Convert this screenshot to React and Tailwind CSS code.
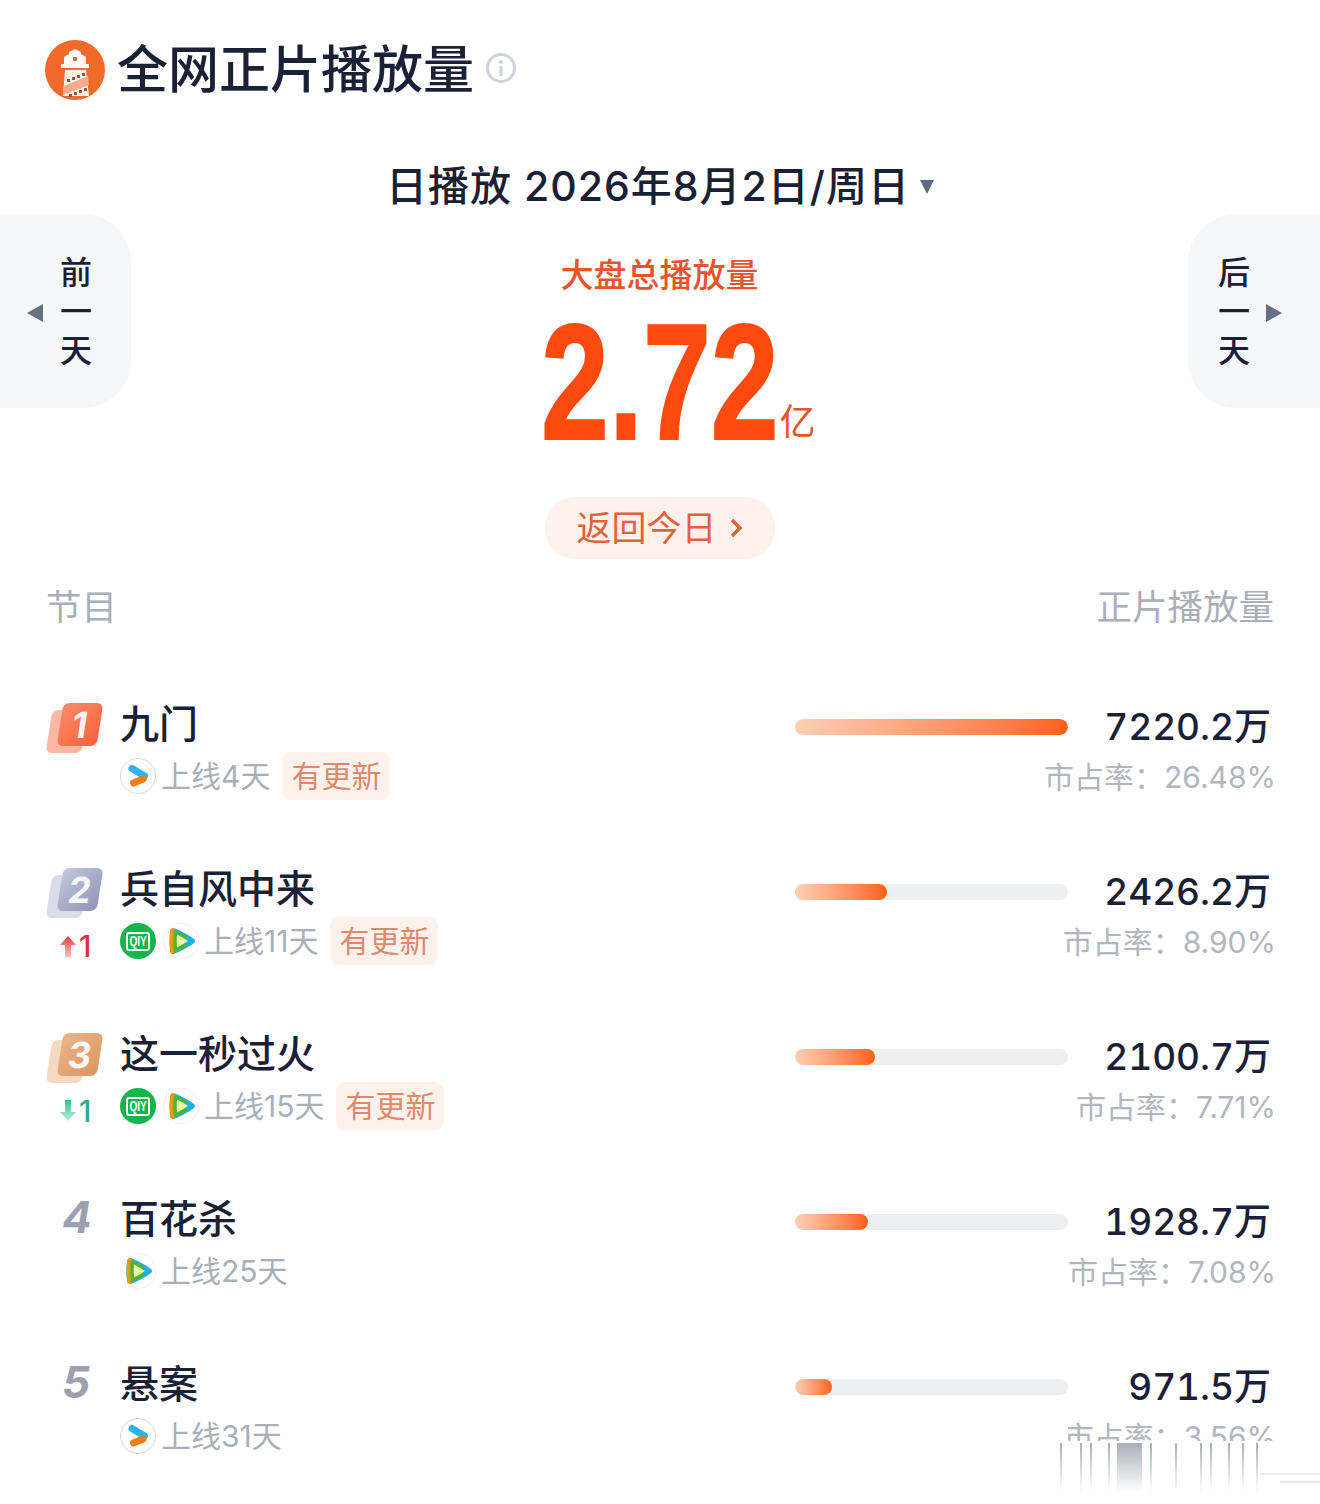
import React from 'react';

const rows = [
    { rank: 1, title: '九门', icons: ['youku'], days: '上线4天', update: true, bar: '100%', value: '7220.2万', share: '26.48%', badge: 'gold' },
    { rank: 2, title: '兵自风中来', icons: ['iqiyi', 'tencent'], days: '上线11天', update: true, bar: '33.7%', value: '2426.2万', share: '8.90%', badge: 'silver', change: 'up' },
    { rank: 3, title: '这一秒过火', icons: ['iqiyi', 'tencent'], days: '上线15天', update: true, bar: '29.3%', value: '2100.7万', share: '7.71%', badge: 'bronze', change: 'down' },
    { rank: 4, title: '百花杀', icons: ['tencent'], days: '上线25天', bar: '26.7%', value: '1928.7万', share: '7.08%' },
    { rank: 5, title: '悬案', icons: ['youku'], days: '上线31天', bar: '13.6%', value: '971.5万', share: '3.56%', cut: true },
];

// vertical smear left by the watermark at the bottom of the picture
const smear = [
    { left: 280, width: 2 }, { left: 300, width: 2 }, { left: 310, width: 2 }, { left: 328, width: 2 },
    { left: 337, width: 25 }, { left: 370, width: 2 }, { left: 395, width: 2 }, { left: 420, width: 2 },
    { left: 430, width: 2 }, { left: 448, width: 2 }, { left: 462, width: 2 }, { left: 476, width: 2 },
];

function Logo() {
    return (
        <svg width="60" height="60" viewBox="0 0 60 60">
            <defs>
                <clipPath id="logoClip"><circle cx="30" cy="30" r="30" /></clipPath>
            </defs>
            <circle cx="30" cy="30" r="30" fill="#f26a2a" />
            <g clipPath="url(#logoClip)">
                <path d="M19 17 L24 14 L24 12 L30 9 L36 12 L36 14 L41 17 L41 24 L44 24 L44 28 L16 28 L16 24 L19 24 Z" fill="#fff" />
                <circle cx="30" cy="19" r="2.2" fill="#c46a3c" />
                <path d="M20 30 L41 30 L44 56 L18 56 Z" fill="#fbeee2" />
                <path d="M19 46 L43 36 L44 45 L18 55 Z" fill="#f3a98a" />
                <g fill="#8a5a44">
                    <rect x="22" y="39" width="3" height="3" />
                    <rect x="27" y="37" width="3" height="3" />
                    <rect x="32" y="35" width="3" height="3" />
                    <rect x="37" y="33" width="3" height="3" />
                    <rect x="24" y="54" width="3" height="3" />
                    <rect x="29" y="52" width="3" height="3" />
                    <rect x="34" y="50" width="3" height="3" />
                    <rect x="39" y="48" width="3" height="3" />
                </g>
            </g>
        </svg>
    );
}

function InfoIcon() {
    return (
        <svg width="32" height="32" viewBox="0 0 32 32">
            <circle cx="16" cy="16" r="13.5" fill="none" stroke="#cdd2da" strokeWidth="3" />
            <circle cx="16" cy="10" r="2" fill="#cdd2da" />
            <rect x="14.4" y="14" width="3.2" height="10" rx="1" fill="#cdd2da" />
        </svg>
    );
}

function Youku() {
    return (
        <svg width="36" height="36" viewBox="0 0 36 36" className="shrink-0">
            <circle cx="18" cy="18" r="17.5" fill="#fff" stroke="#d3d7dc" />
            <line x1="12" y1="10.5" x2="24.5" y2="18" stroke="#2fb3ea" strokeWidth="7" strokeLinecap="round" />
            <line x1="13.5" y1="25" x2="23" y2="21" stroke="#ee7d1c" strokeWidth="7" strokeLinecap="round" />
        </svg>
    );
}

function Iqiyi() {
    return (
        <div className="flex h-[36px] w-[36px] shrink-0 items-center justify-center rounded-full bg-[#14b54b]">
            <div className="flex h-[19px] w-[24px] items-center justify-center rounded-[3px] border-2 border-white">
                <span className="inline-block scale-x-[0.72] font-['Liberation_Sans'] text-[14px] leading-none font-bold text-white">QIY</span>
            </div>
        </div>
    );
}

function Tencent() {
    return (
        <svg width="36" height="36" viewBox="0 0 36 36" className="shrink-0">
            <circle cx="18" cy="18" r="17.5" fill="#fff" stroke="#f1f2f4" />
            <path d="M7 9 Q7 4 12 5.5 Q23 10 31 16 Q33 18 31 20 Q23 26 12 30.5 Q7 32 7 27 Q6 18 7 9 Z" fill="#1cb0e4" />
            <path d="M7 9 Q7 4 12 5.5 Q10.5 18 12 30.5 Q7 32 7 27 Q6 18 7 9 Z" fill="#e8961c" />
            <path d="M11 7 Q17 9 24 13 Q21 18 24 23 Q17 27 11 29 Q9.5 18 11 7 Z" fill="#4fb52f" />
            <path d="M14 11.5 Q20 14.5 25 18 Q20 21.5 14 24.5 Q13.5 18 14 11.5 Z" fill="#e6f6b0" />
        </svg>
    );
}

function RankBadge({ rank, badge }) {
    const styles = {
        gold: { back: 'bg-[#fcb8a4]', front: 'bg-gradient-to-br from-[#fb8a68] to-[#fb5f3c]' },
        silver: { back: 'bg-[#d9dcea]', front: 'bg-gradient-to-br from-[#c3c7de] to-[#8e95b5]' },
        bronze: { back: 'bg-[#f6d9c2]', front: 'bg-gradient-to-br from-[#eab68a] to-[#dc9660]' },
    };
    return (
        <div className="relative h-[50px] w-[60px]">
            <div className={`absolute top-[7px] left-[4px] h-[43px] w-[36px] -skew-x-[9deg] rounded-[6px] ${styles[badge].back}`}></div>
            <div className={`absolute top-0 left-[15px] flex h-[43px] w-[40px] -skew-x-[9deg] items-center justify-center rounded-[6px] ${styles[badge].front}`}>
                <span className="font-['Inter'] text-[36px] leading-none font-bold text-white/90">{rank}</span>
            </div>
        </div>
    );
}

function RankChange({ change }) {
    const up = change === 'up';
    return (
        <div className="mt-[11px] ml-[14px] flex h-[34px] items-center gap-[2px]">
            <svg width="18" height="24" viewBox="0 0 18 24" className={up ? '' : 'rotate-180'}>
                <defs>
                    <linearGradient id="upArrow" x1="0" y1="0" x2="0" y2="1">
                        <stop offset="0" stopColor="#ef3b3b" />
                        <stop offset="1" stopColor="#fbc0c0" />
                    </linearGradient>
                    <linearGradient id="downArrow" x1="0" y1="1" x2="0" y2="0">
                        <stop offset="0" stopColor="#2cc38f" />
                        <stop offset="1" stopColor="#c5eee0" />
                    </linearGradient>
                </defs>
                <path d="M9 2 L17 11 L12 11 L12 23 L6 23 L6 11 L1 11 Z" fill={up ? 'url(#upArrow)' : 'url(#downArrow)'} />
            </svg>
            <span className={`font-['Inter'] text-[30px] leading-none font-medium ${up ? 'text-[#d8343c]' : 'text-[#35a985]'}`}>1</span>
        </div>
    );
}

function Row({ row }) {
    return (
        <div className="flex h-[165px] items-start">
            <div className="w-[75px] shrink-0 pt-[13px]">
                {row.badge ? (
                    <>
                        <RankBadge rank={row.rank} badge={row.badge} />
                        {row.change && <RankChange change={row.change} />}
                    </>
                ) : (
                    <div className="mt-[-5px] pl-[17px] font-['Inter'] text-[44px] leading-[48px] font-bold text-[#9ca1af] italic">{row.rank}</div>
                )}
            </div>
            <div className="min-w-0 flex-1 pt-[10px]">
                <div className="text-[39px] leading-[48px] font-medium text-[#1a2035]">{row.title}</div>
                <div className="mt-[4px] flex h-[48px] items-center">
                    <div className="flex items-center gap-[7px]">
                        {row.icons.map((name, idx) => {
                            if (name === 'youku') return <Youku key={idx} />;
                            if (name === 'iqiyi') return <Iqiyi key={idx} />;
                            return <Tencent key={idx} />;
                        })}
                    </div>
                    <span className="ml-[5px] text-[30px] leading-none text-[#a9afb9]">{row.days}</span>
                    {row.update && (
                        <span className="ml-[12px] flex h-[48px] items-center rounded-[9px] bg-[#fdf1ec] px-[9px] text-[30px] leading-none text-[#dc8a6c]">有更新</span>
                    )}
                </div>
            </div>
            <div className="mt-[29px] h-[16px] w-[273px] shrink-0 overflow-hidden rounded-full bg-[#eeeff1]">
                <div className="h-full rounded-full bg-gradient-to-r from-[#fbcfb4] to-[#ff5f10]" style={{ width: row.bar }}></div>
            </div>
            <div className="w-[208px] shrink-0 pt-[13px] text-right">
                <div className="pr-[5px] text-[37px] leading-[48px] font-medium text-[#1a2035] tabular-nums">{row.value}</div>
                <div className={`mt-[6px] flex justify-end text-[30px] leading-[40px] whitespace-nowrap text-[#b1b6bf] ${row.cut ? 'h-[24px] overflow-hidden' : ''}`}>
                    市占率：{row.share}
                </div>
            </div>
        </div>
    );
}

export default function App() {
    return (
        <div className="relative h-[1504px] w-[1320px] overflow-hidden bg-white font-['Inter','Noto_Sans_CJK_SC',sans-serif]">
            {/* header */}
            <div className="flex items-center pt-[40px] pl-[45px]">
                <Logo />
                <h1 className="ml-[12px] text-[51px] leading-[60px] font-medium text-[#1a2035]">全网正片播放量</h1>
                <div className="mt-[-4px] ml-[11px]"><InfoIcon /></div>
            </div>

            {/* date */}
            <div className="mt-[62px] flex h-[48px] items-center justify-center text-[41px] leading-[48px] font-medium tracking-[1px] text-[#1a2035]">
                <span>日播放 2026年8月2日/周日</span>
                <span className="mt-[2px] ml-[10px] h-0 w-0 border-x-[7px] border-t-[14px] border-x-transparent border-t-[#5d6b7e]"></span>
            </div>

            <div className="mt-[4px] flex items-start">
                {/* previous day */}
                <div className="flex h-[194px] w-[131px] shrink-0 items-center rounded-r-[48px] bg-[#f6f7f9] pl-[27px]">
                    <span className="mt-[4px] h-0 w-0 border-y-[9px] border-r-[16px] border-y-transparent border-r-[#667080]"></span>
                    <div className="ml-[17px] w-[32px] text-center text-[32px] leading-[39px] font-medium text-[#1a2035]">前<br />一<br />天</div>
                </div>

                {/* total */}
                <div className="flex min-w-0 flex-1 flex-col items-center pt-[41px]">
                    <div className="text-[33px] leading-[40px] font-medium text-[#e8542a]">大盘总播放量</div>
                    <div className="relative mt-[8px] h-[185px] w-[230px]">
                        <span className="absolute top-[-16px] left-[-45px] block w-[316px] scale-x-[0.74] text-center font-['Liberation_Sans'] text-[165px] leading-[190px] font-bold whitespace-nowrap text-[#ff4a0f] [-webkit-text-stroke:2px_#ff4a0f]">2.72</span>
                        <span className="absolute top-[99px] left-[235px] text-[36px] leading-[40px] text-[#e5552d]">亿</span>
                    </div>
                    <div className="mt-[9px] flex h-[62px] w-[230px] items-center justify-center rounded-full bg-[#fdf1ec] text-[35px] leading-none text-[#e0623c]">
                        <span>返回今日</span>
                        <svg width="14" height="22" viewBox="0 0 14 22" className="ml-[12px]">
                            <path d="M3 3 L11 11 L3 19" fill="none" stroke="#e0623c" strokeWidth="3.5" />
                        </svg>
                    </div>
                </div>

                {/* next day */}
                <div className="flex h-[194px] w-[132px] shrink-0 items-center justify-end rounded-l-[48px] bg-[#f6f7f9] pr-[38px]">
                    <div className="mr-[16px] w-[32px] text-center text-[32px] leading-[39px] font-medium text-[#1a2035]">后<br />一<br />天</div>
                    <span className="mt-[4px] h-0 w-0 border-y-[9px] border-l-[16px] border-y-transparent border-l-[#667080]"></span>
                </div>
            </div>

            {/* column heads */}
            <div className="mt-[27px] flex items-center justify-between px-[46px] text-[35.5px] leading-[44px] text-[#a9afb9]">
                <span>节目</span>
                <span>正片播放量</span>
            </div>

            {/* list */}
            <div className="mt-[60px] pr-[44px] pl-[45px]">
                {rows.map((row) => <Row key={row.rank} row={row} />)}
            </div>

            {/* watermark smear */}
            <div className="absolute top-[1443px] left-[780px] h-[49px] w-[540px]">
                {smear.map((s, idx) => (
                    <div key={idx} className="absolute top-0 h-full bg-gradient-to-b from-[#a9afb9] to-transparent" style={{ left: s.left, width: s.width }}></div>
                ))}
                <div className="absolute top-[30px] right-0 h-[2px] w-[60px] bg-[#eceef1]"></div>
                <div className="absolute top-[38px] right-0 h-[2px] w-[40px] bg-[#e6e8eb]"></div>
            </div>
        </div>
    );
}
